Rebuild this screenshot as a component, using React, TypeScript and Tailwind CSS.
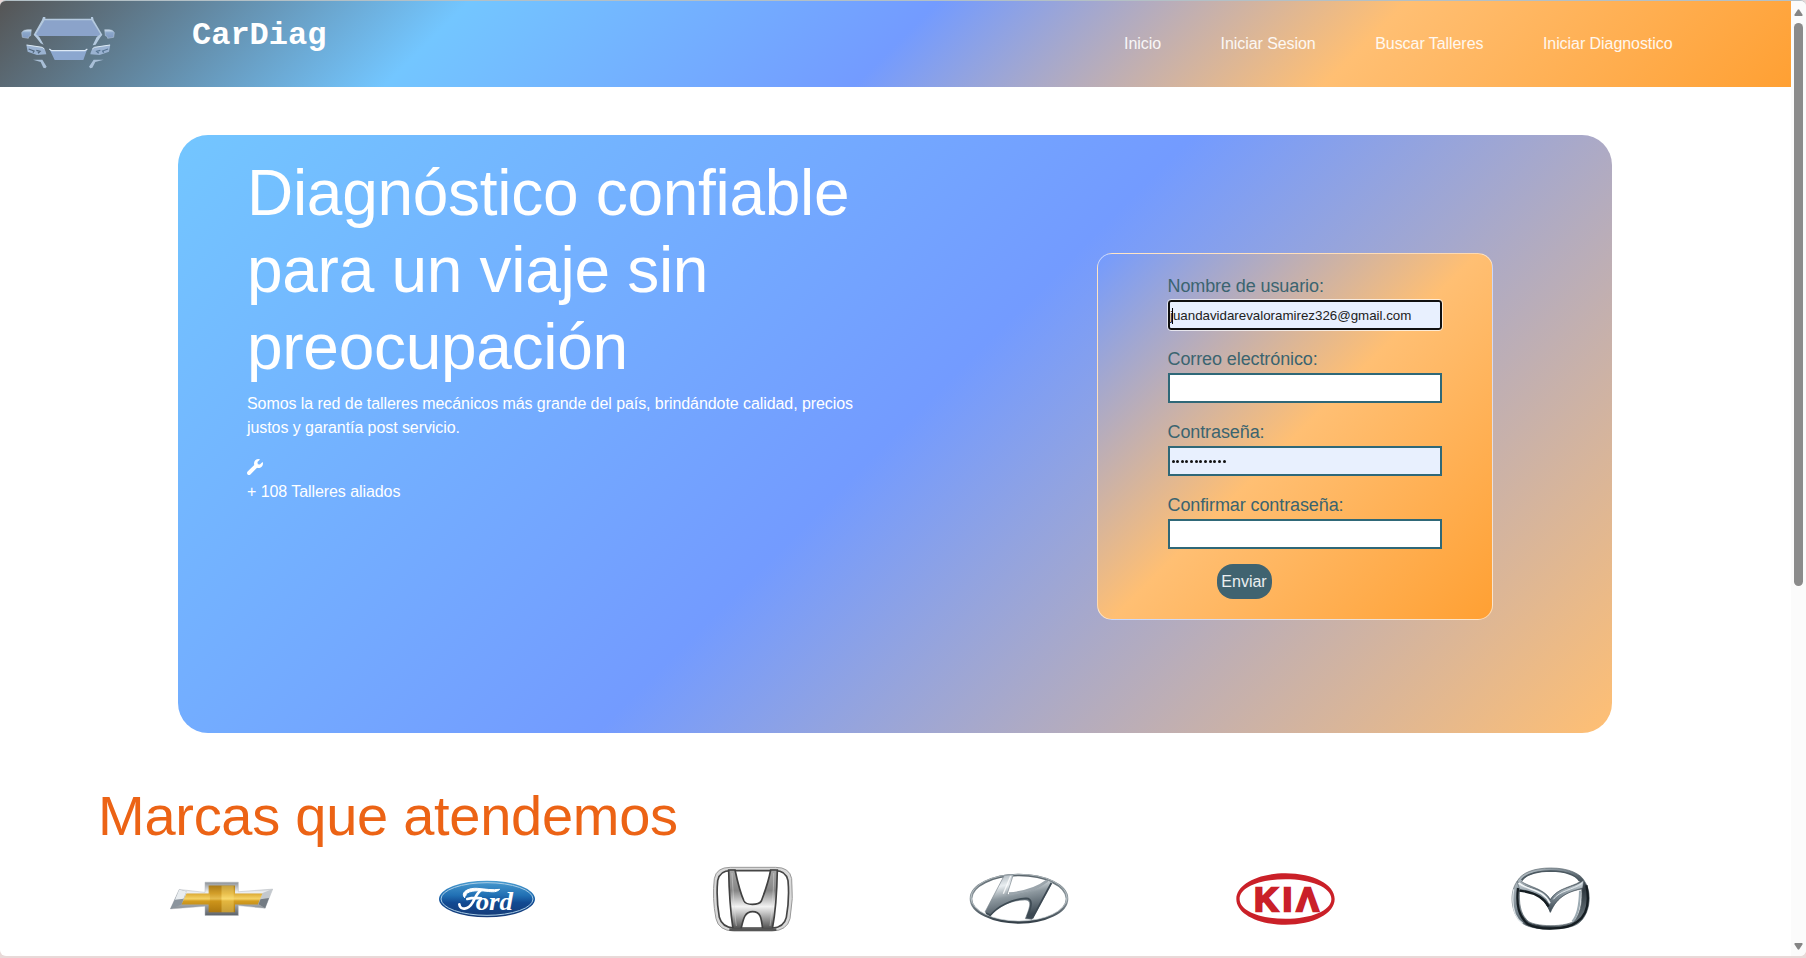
import React from "react";

const navItems = ["Inicio", "Iniciar Sesion", "Buscar Talleres", "Iniciar Diagnostico"];

function CarLogo() {
  return (
    <svg width="94" height="54" viewBox="62 48 282 162" aria-hidden="true">
      <defs>
        <linearGradient id="carEdge" x1="0" y1="0" x2="0" y2="1">
          <stop offset="0" stopColor="#d3e2f0" />
          <stop offset="0.35" stopColor="#8aa6c9" />
          <stop offset="1" stopColor="#8199c2" />
        </linearGradient>
      </defs>
      <path d="M133 59 H275 L304 108 H102 Z" fill="#8ba3ca" />
      <path d="M128 51 H135 V56 H272 V51 H278 L280 60 L306 104 L299 113 L286 134 L277 136 L289 111 L300 103 L274 61 H133 L107 103 L117 111 L130 134 L121 130 L108 113 L100 104 L125 60 Z" fill="#b4c9df" />
      <path d="M64 98 Q68 89 82 89 L93 89 L91 107 L85 110 L84 115 L66 112 Z" fill="url(#carEdge)" stroke="#bfd0e2" strokeWidth="1.5" />
      <path d="M342 98 Q338 89 326 89 L313 89 L315 107 L321 110 L322 115 L340 112 Z" fill="url(#carEdge)" stroke="#bfd0e2" strokeWidth="1.5" />
      <path d="M78 134 L126 142 Q135 147 138 163 L110 165 L82 155 Z" fill="#9ab2d1" />
      <path d="M79 135 L126 142 L132 147" fill="none" stroke="#dce9f3" strokeWidth="3" />
      <path d="M85 147 L101 153 L98 158 M108 151 L119 154 L113 160" fill="none" stroke="#50657a" strokeWidth="4" />
      <path d="M330 134 L282 142 Q273 147 270 163 L298 165 L326 155 Z" fill="#9ab2d1" />
      <path d="M329 135 L282 142 L276 147" fill="none" stroke="#dce9f3" strokeWidth="3" />
      <path d="M323 147 L307 153 L310 158 M300 151 L289 154 L295 160" fill="none" stroke="#587694" strokeWidth="4" />
      <path d="M147 146 L153 150 H254 L261 146 L249 180 H163 Z" fill="#8ca7cf" />
      <path d="M147 147 L154 152 H254 L261 147" fill="none" stroke="#dde9f5" strokeWidth="3.5" />
      <path d="M98 179 L126 179 L139 200 L135 205 L129 203 L121 186 Z" fill="#a9bfd7" />
      <path d="M310 179 L280 179 L266 200 L270 205 L276 203 L285 186 Z" fill="#a9bfd7" />
    </svg>
  );
}

function Wrench() {
  return (
    <svg width="16" height="16" viewBox="0 0 512 512" fill="currentColor" aria-hidden="true">
      <path d="M507.73 109.1c-2.24-9.03-13.54-12.09-20.12-5.51l-74.36 74.36-67.88-11.31-11.31-67.88 74.36-74.36c6.62-6.62 3.43-17.9-5.66-20.16-47.38-11.74-99.55.91-136.58 37.93-39.64 39.64-50.55 97.1-34.05 147.2L18.74 402.76c-24.99 24.99-24.99 65.51 0 90.5 24.99 24.99 65.51 24.99 90.5 0l213.21-213.21c50.12 16.71 107.47 5.68 147.37-34.22 37.07-37.07 49.7-89.32 37.91-136.73z" />
    </svg>
  );
}

function Chevrolet() {
  return (
    <svg width="105" height="36" viewBox="54 90 318 108" aria-label="Chevrolet">
      <defs>
        <linearGradient id="chSilver" x1="0" y1="0" x2="0" y2="1">
          <stop offset="0" stopColor="#8b9096" />
          <stop offset="0.3" stopColor="#eef0f2" />
          <stop offset="0.65" stopColor="#a6abb1" />
          <stop offset="1" stopColor="#5b6168" />
        </linearGradient>
        <linearGradient id="chGold" x1="0" y1="0" x2="0" y2="1">
          <stop offset="0" stopColor="#a87c1d" />
          <stop offset="0.3" stopColor="#dcaa33" />
          <stop offset="0.5" stopColor="#f5d368" />
          <stop offset="0.58" stopColor="#d59e20" />
          <stop offset="1" stopColor="#a97711" />
        </linearGradient>
      </defs>
      <path d="M163 93 H264 V122 L368 114 L345 172 L264 164 V194 H163 V166 L58 174 L85 115 L163 124 Z" fill="url(#chSilver)" stroke="#b5babf" strokeWidth="1.5" />
      <path d="M58 174 L85 115 L107 121 L92 161 Z" fill="#8b949d" />
      <path d="M85 115 L107 121 L98 143 L72 146 Z" fill="#e9edf0" />
      <path d="M368 114 L345 172 L325 160 L337 126 Z" fill="#c3c8cd" />
      <path d="M357 141 L345 172 L325 160 L331 145 Z" fill="#737b83" />
      <path d="M174 103 H254 V127 H337 L323 161 H254 V184 H174 V161 H92 L107 127 H174 Z" fill="url(#chGold)" />
      <path d="M178 104 H213 V184 H178 Z" fill="#b77d0d" opacity=".25" />
      <path d="M213 104 H250 V184 H213 Z" fill="#ffe47c" opacity=".35" />
    </svg>
  );
}

function Ford() {
  return (
    <svg width="98" height="38" viewBox="864 90 294 114" aria-label="Ford">
      <defs>
        <linearGradient id="fordBlue" x1="0" y1="0" x2="0" y2="1">
          <stop offset="0" stopColor="#4a9cd0" />
          <stop offset="0.4" stopColor="#2170b4" />
          <stop offset="0.6" stopColor="#124a92" />
          <stop offset="1" stopColor="#163a75" />
        </linearGradient>
      </defs>
      <ellipse cx="1011" cy="147" rx="144" ry="55" fill="url(#fordBlue)" />
      <ellipse cx="1011" cy="147" rx="138" ry="49" fill="none" stroke="#a9cde6" strokeWidth="3" />
      <path d="M945 144 C930 130 950 113 982 115 C1005 117 1028 121 1049 118 C1037 130 1020 124 1001 123 C980 121 948 122 947 138" fill="#fff" stroke="#fff" strokeWidth="3" />
      <path d="M928 163 C930 182 955 180 968 157 C976 143 980 130 992 121 M952 147 Q972 141 993 145" fill="none" stroke="#fff" strokeWidth="8" strokeLinecap="round" />
      <text x="977" y="179" fontFamily="Liberation Serif" fontSize="74" fontStyle="italic" fontWeight="700" fill="#fff" textLength="112" lengthAdjust="spacingAndGlyphs">ord</text>
    </svg>
  );
}

function Honda() {
  return (
    <svg width="82" height="68" viewBox="95 44 246 204" aria-label="Honda">
      <defs>
        <linearGradient id="hoMetal" x1="0" y1="0" x2="0" y2="1">
          <stop offset="0" stopColor="#a5a5a5" />
          <stop offset="0.35" stopColor="#858585" />
          <stop offset="0.62" stopColor="#f3f3f3" />
          <stop offset="1" stopColor="#4d4d4d" />
        </linearGradient>
      </defs>
      <path d="M150 51 H286 Q328 51 334 85 Q340 145 329 205 Q320 241 275 242 H160 Q115 241 107 205 Q95 145 102 85 Q108 51 150 51 Z" fill="#d9d9d9" stroke="#999" strokeWidth="3" />
      <path d="M151 61 H284 Q317 61 323 91 Q328 145 318 201 Q311 231 276 233 H160 Q125 231 117 201 Q107 145 112 91 Q118 61 151 61 Z" fill="#fff" stroke="#454545" strokeWidth="5" />
      <path d="M145 59 H164 C172 96 184 137 191 152 Q196 162 216 162 Q237 162 243 152 C253 126 265 92 271 59 H291 C290 120 286 183 276 236 H247 C243 202 241 184 217 184 C192 184 189 207 182 236 H158 C150 181 146 122 145 59 Z" fill="url(#hoMetal)" stroke="#414141" strokeWidth="5" />
      <path d="M155 68 C158 126 162 184 168 227 M280 68 C280 126 275 184 269 227" fill="none" stroke="#ddd" strokeWidth="3" opacity=".45" />
      <path d="M147 238 H288" stroke="#565656" strokeWidth="8" />
    </svg>
  );
}

function Hyundai() {
  return (
    <svg width="102" height="54" viewBox="861 74 306 162" aria-label="Hyundai">
      <defs>
        <linearGradient id="hyMetal" x1="0" y1="0" x2="0.3" y2="1">
          <stop offset="0" stopColor="#a4aeb5" />
          <stop offset="0.3" stopColor="#e9eef1" />
          <stop offset="0.55" stopColor="#8d989f" />
          <stop offset="1" stopColor="#3c4852" />
        </linearGradient>
        <linearGradient id="hyRing" x1="0" y1="0" x2="0" y2="1">
          <stop offset="0" stopColor="#59646b" />
          <stop offset="0.5" stopColor="#8e999f" />
          <stop offset="1" stopColor="#343f48" />
        </linearGradient>
      </defs>
      <ellipse cx="1014" cy="154" rx="144" ry="71" fill="#fff" stroke="url(#hyRing)" strokeWidth="8" />
      <ellipse cx="1014" cy="151" rx="144" ry="70" fill="none" stroke="#d1d9dd" strokeWidth="2" />
      <path d="M970 84 L997 82 L978 142 C1019 140 1067 130 1101 99 L1114 105 L1053 216 L1033 214 C1045 183 1056 158 1031 158 C991 158 948 178 927 206 L912 194 Z" fill="url(#hyMetal)" stroke="#7b878e" strokeWidth="2" />
      <path d="M994 128 C1003 111 1060 103 1098 99 C1070 125 1020 138 982 141 Z" fill="#fff" />
      <path d="M984 139 C1020 136 1067 125 1099 100" fill="none" stroke="#9ba5ac" strokeWidth="8" />
      <path d="M1111 107 L1054 213" stroke="#3c4852" strokeWidth="5" />
      <path d="M915 197 L928 204 C950 177 993 155 1035 153 C1055 153 1054 174 1039 207" fill="none" stroke="#3e4b54" strokeWidth="5" />
      <path d="M989 86 L967 139" fill="none" stroke="#fff" strokeWidth="4" opacity=".8" />
    </svg>
  );
}

function Kia() {
  return (
    <svg width="99" height="54" viewBox="73 66 300 162" aria-label="Kia">
      <path fillRule="evenodd" d="M223 69 C308 69 372 103 372 147 C372 191 308 225 223 225 C138 225 74 191 74 147 C74 103 138 69 223 69 Z M223 87 C146 87 84 111 84 147 C84 183 146 207 223 207 C300 207 362 183 362 147 C362 111 300 87 223 87 Z" fill="#ca2028" />
      <text x="128" y="182" fontFamily="Liberation Sans" fontSize="101" fontWeight="700" fill="#ca2028" stroke="#ca2028" strokeWidth="7" textLength="196" lengthAdjust="spacing">KIΛ</text>
    </svg>
  );
}

function Mazda() {
  return (
    <svg width="80" height="66" viewBox="903 50 240 198" aria-label="Mazda">
      <defs>
        <linearGradient id="mzMetal" x1="0" y1="0" x2="1" y2="1">
          <stop offset="0" stopColor="#c7d0d5" />
          <stop offset="0.4" stopColor="#74818a" />
          <stop offset="0.65" stopColor="#303a41" />
          <stop offset="1" stopColor="#8c989f" />
        </linearGradient>
        <linearGradient id="mzWing" x1="0" y1="0" x2="0" y2="1">
          <stop offset="0" stopColor="#dfe7eb" />
          <stop offset="0.45" stopColor="#84919a" />
          <stop offset="1" stopColor="#3a464f" />
        </linearGradient>
      </defs>
      <path fillRule="evenodd" d="M1022 56 C1076 56 1112 73 1123 95 C1147 128 1141 191 1109 219 C1081 246 962 247 934 219 C902 190 897 128 922 95 C935 71 970 56 1022 56 Z M1022 65 C971 65 946 78 935 97 C960 114 1001 117 1021 150 C1042 116 1084 114 1110 97 C1100 76 1070 65 1022 65 Z M929 122 C926 160 931 192 950 211 C966 235 1079 235 1096 211 C1113 188 1117 154 1115 119 C1079 126 1042 139 1021 189 C1003 141 970 125 929 122 Z" fill="url(#mzMetal)" stroke="#59656d" strokeWidth="2" />
      <path d="M935 92 C950 73 982 66 1022 65 C1066 66 1097 78 1109 95" fill="none" stroke="#4b5860" strokeWidth="5" />
      <path d="M921 96 C951 122 999 111 1021 152 C1043 112 1091 118 1121 93 L1118 116 C1077 127 1042 139 1021 189 C1001 138 968 127 929 120 Z" fill="url(#mzWing)" stroke="#46525a" strokeWidth="1.5" />
      <path d="M926 101 C955 124 999 119 1020 162" fill="none" stroke="#f1f5f7" strokeWidth="5" />
      <path d="M1030 150 C1050 123 1088 122 1116 102" fill="none" stroke="#e3eaee" strokeWidth="3" />
      <path d="M928 124 C968 128 1000 142 1016 172 M924 116 C918 170 927 200 952 223 C987 244 1070 242 1101 218 C1134 195 1138 151 1129 108" fill="none" stroke="#151d22" strokeWidth="7" />
      <path d="M911 120 C903 173 914 205 938 222" fill="none" stroke="#dce3e7" strokeWidth="4" />
      <path d="M1110 124 C1109 170 1104 198 1087 216" fill="none" stroke="#9dabb3" strokeWidth="6" />
    </svg>
  );
}

function Field({ label, children }: { label: string; children?: React.ReactNode }) {
  return (
    <div className="flex h-[73px] flex-col">
      <span className="h-[27px] text-[18px] leading-[27px] tracking-[-0.1px] text-[#3b6470]">{label}</span>
      {children}
    </div>
  );
}

const brands = [Chevrolet, Ford, Honda, Hyundai, Kia, Mazda];

export default function App() {
  return (
    <div className="h-[958px] w-[1806px] overflow-hidden bg-[#e8d9d8] pb-[2px] font-['Liberation_Sans',Arial,sans-serif]">
      <div className="flex h-[956px] overflow-hidden rounded-[6px] border-t border-[#b3c0c6] bg-white">
        <main className="w-[1791px] shrink-0">
          <header className="flex h-[86px] bg-[linear-gradient(135deg,#555555_0%,#73c6ff_25%,#739bff_50%,#ffbf73_75%,#ffa033_100%)] text-white">
            <div className="pl-[20.5px] pt-[15px]">
              <CarLogo />
            </div>
            <div className="ml-[77.5px] pt-[17px] font-['Liberation_Mono',monospace] text-[32px] font-bold leading-[36px]">
              CarDiag
            </div>
            <nav className="ml-auto mr-[118.5px] flex h-[86px] items-center gap-[59.5px] text-[16px] leading-6 tracking-[-0.06px] text-white/90">
              {navItems.map((t) => (
                <a key={t}>{t}</a>
              ))}
            </nav>
          </header>

          <section className="ml-[178px] mt-[48px] flex h-[598px] w-[1434px] rounded-[30px] bg-[linear-gradient(135deg,#73c6ff_0%,#739bff_50%,#ffbf73_100%)]">
            <div className="w-[690px] pl-[69px] pt-[20px] text-white">
              <h1 className="text-[64px] leading-[76.8px] tracking-[-0.29px]">
                Diagnóstico confiable
                <br />
                para un viaje sin
                <br />
                preocupación
              </h1>
              <p className="mt-[7px] text-[16px] leading-6 tracking-[-0.07px]">
                Somos la red de talleres mecánicos más grande del país, brindándote calidad, precios
                <br />
                justos y garantía post servicio.
              </p>
              <div className="mt-4 flex h-6 items-center pb-[2px]">
                <Wrench />
              </div>
              <p className="text-[16px] leading-6 tracking-[-0.07px]">+ 108 Talleres aliados</p>
            </div>
            <form className="ml-[229px] mt-[118px] h-[367px] w-[396px] rounded-[15px] border border-white/60 bg-[linear-gradient(135deg,#739bff_0%,#ffbf73_50%,#ffa033_100%)] pl-[69.5px] pt-[19px]">
              <Field label="Nombre de usuario:">
                <div className="flex h-[30px] w-[274px] items-center rounded-[3px] border-2 border-[#101010] bg-[#e8f0fe] pl-[2px] pt-px text-[13.333px] text-[#222] outline outline-1 outline-white/70">
                  <span className="h-4 w-px bg-black" />
                  <span className="-ml-[2.5px] tracking-[-0.01px]">juandavidarevaloramirez326@gmail.com</span>
                </div>
              </Field>
              <Field label="Correo electrónico:">
                <div className="h-[30px] w-[274px] border-2 border-[#2f6878] bg-white" />
              </Field>
              <Field label="Contraseña:">
                <div className="flex h-[30px] w-[274px] items-center gap-[1.65px] border-2 border-[#2f6878] bg-[#e8f0fe] pl-[2px]">
                  {Array.from({ length: 12 }, (_, i) => (
                    <span key={i} className="h-[3px] w-[3px] rounded-full bg-[#111]" />
                  ))}
                </div>
              </Field>
              <Field label="Confirmar contraseña:">
                <div className="h-[30px] w-[274px] border-2 border-[#2f6878] bg-white" />
              </Field>
              <div className="-mt-px ml-[49px] flex h-[35px] w-[55px] items-center justify-center rounded-[16px] bg-[#406370] text-[16px] text-white/90">
                Enviar
              </div>
            </form>
          </section>

          <h2 className="ml-[98px] mt-[49px] text-[56px] leading-[67px] tracking-[-0.27px] text-[#ec6315]">Marcas que atendemos</h2>
          <div className="ml-[88px] mt-[16px] grid h-[68px] w-[1596px] grid-cols-6 items-center justify-items-center">
            {brands.map((Brand, i) => (
              <Brand key={i} />
            ))}
          </div>
        </main>
        <aside className="flex w-[15px] flex-col items-center bg-[#fbfbfb] pt-[8px]">
          <svg width="9" height="7" viewBox="0 0 9 7" fill="#858585" aria-hidden="true">
            <path d="M3.7 .7 Q4.5 -.2 5.3 .7 L8.6 5.7 Q8.8 7 7.8 7 H1.2 Q.2 7 .4 5.7 Z" />
          </svg>
          <div className="mt-[7px] h-[563px] w-[9px] rounded-full bg-[#8b8b8b]" />
          <svg className="mb-[6px] mt-auto" width="9" height="7" viewBox="0 0 9 7" fill="#858585" aria-hidden="true">
            <path d="M3.7 6.3 Q4.5 7.2 5.3 6.3 L8.6 1.3 Q8.8 0 7.8 0 H1.2 Q.2 0 .4 1.3 Z" />
          </svg>
        </aside>
      </div>
    </div>
  );
}
